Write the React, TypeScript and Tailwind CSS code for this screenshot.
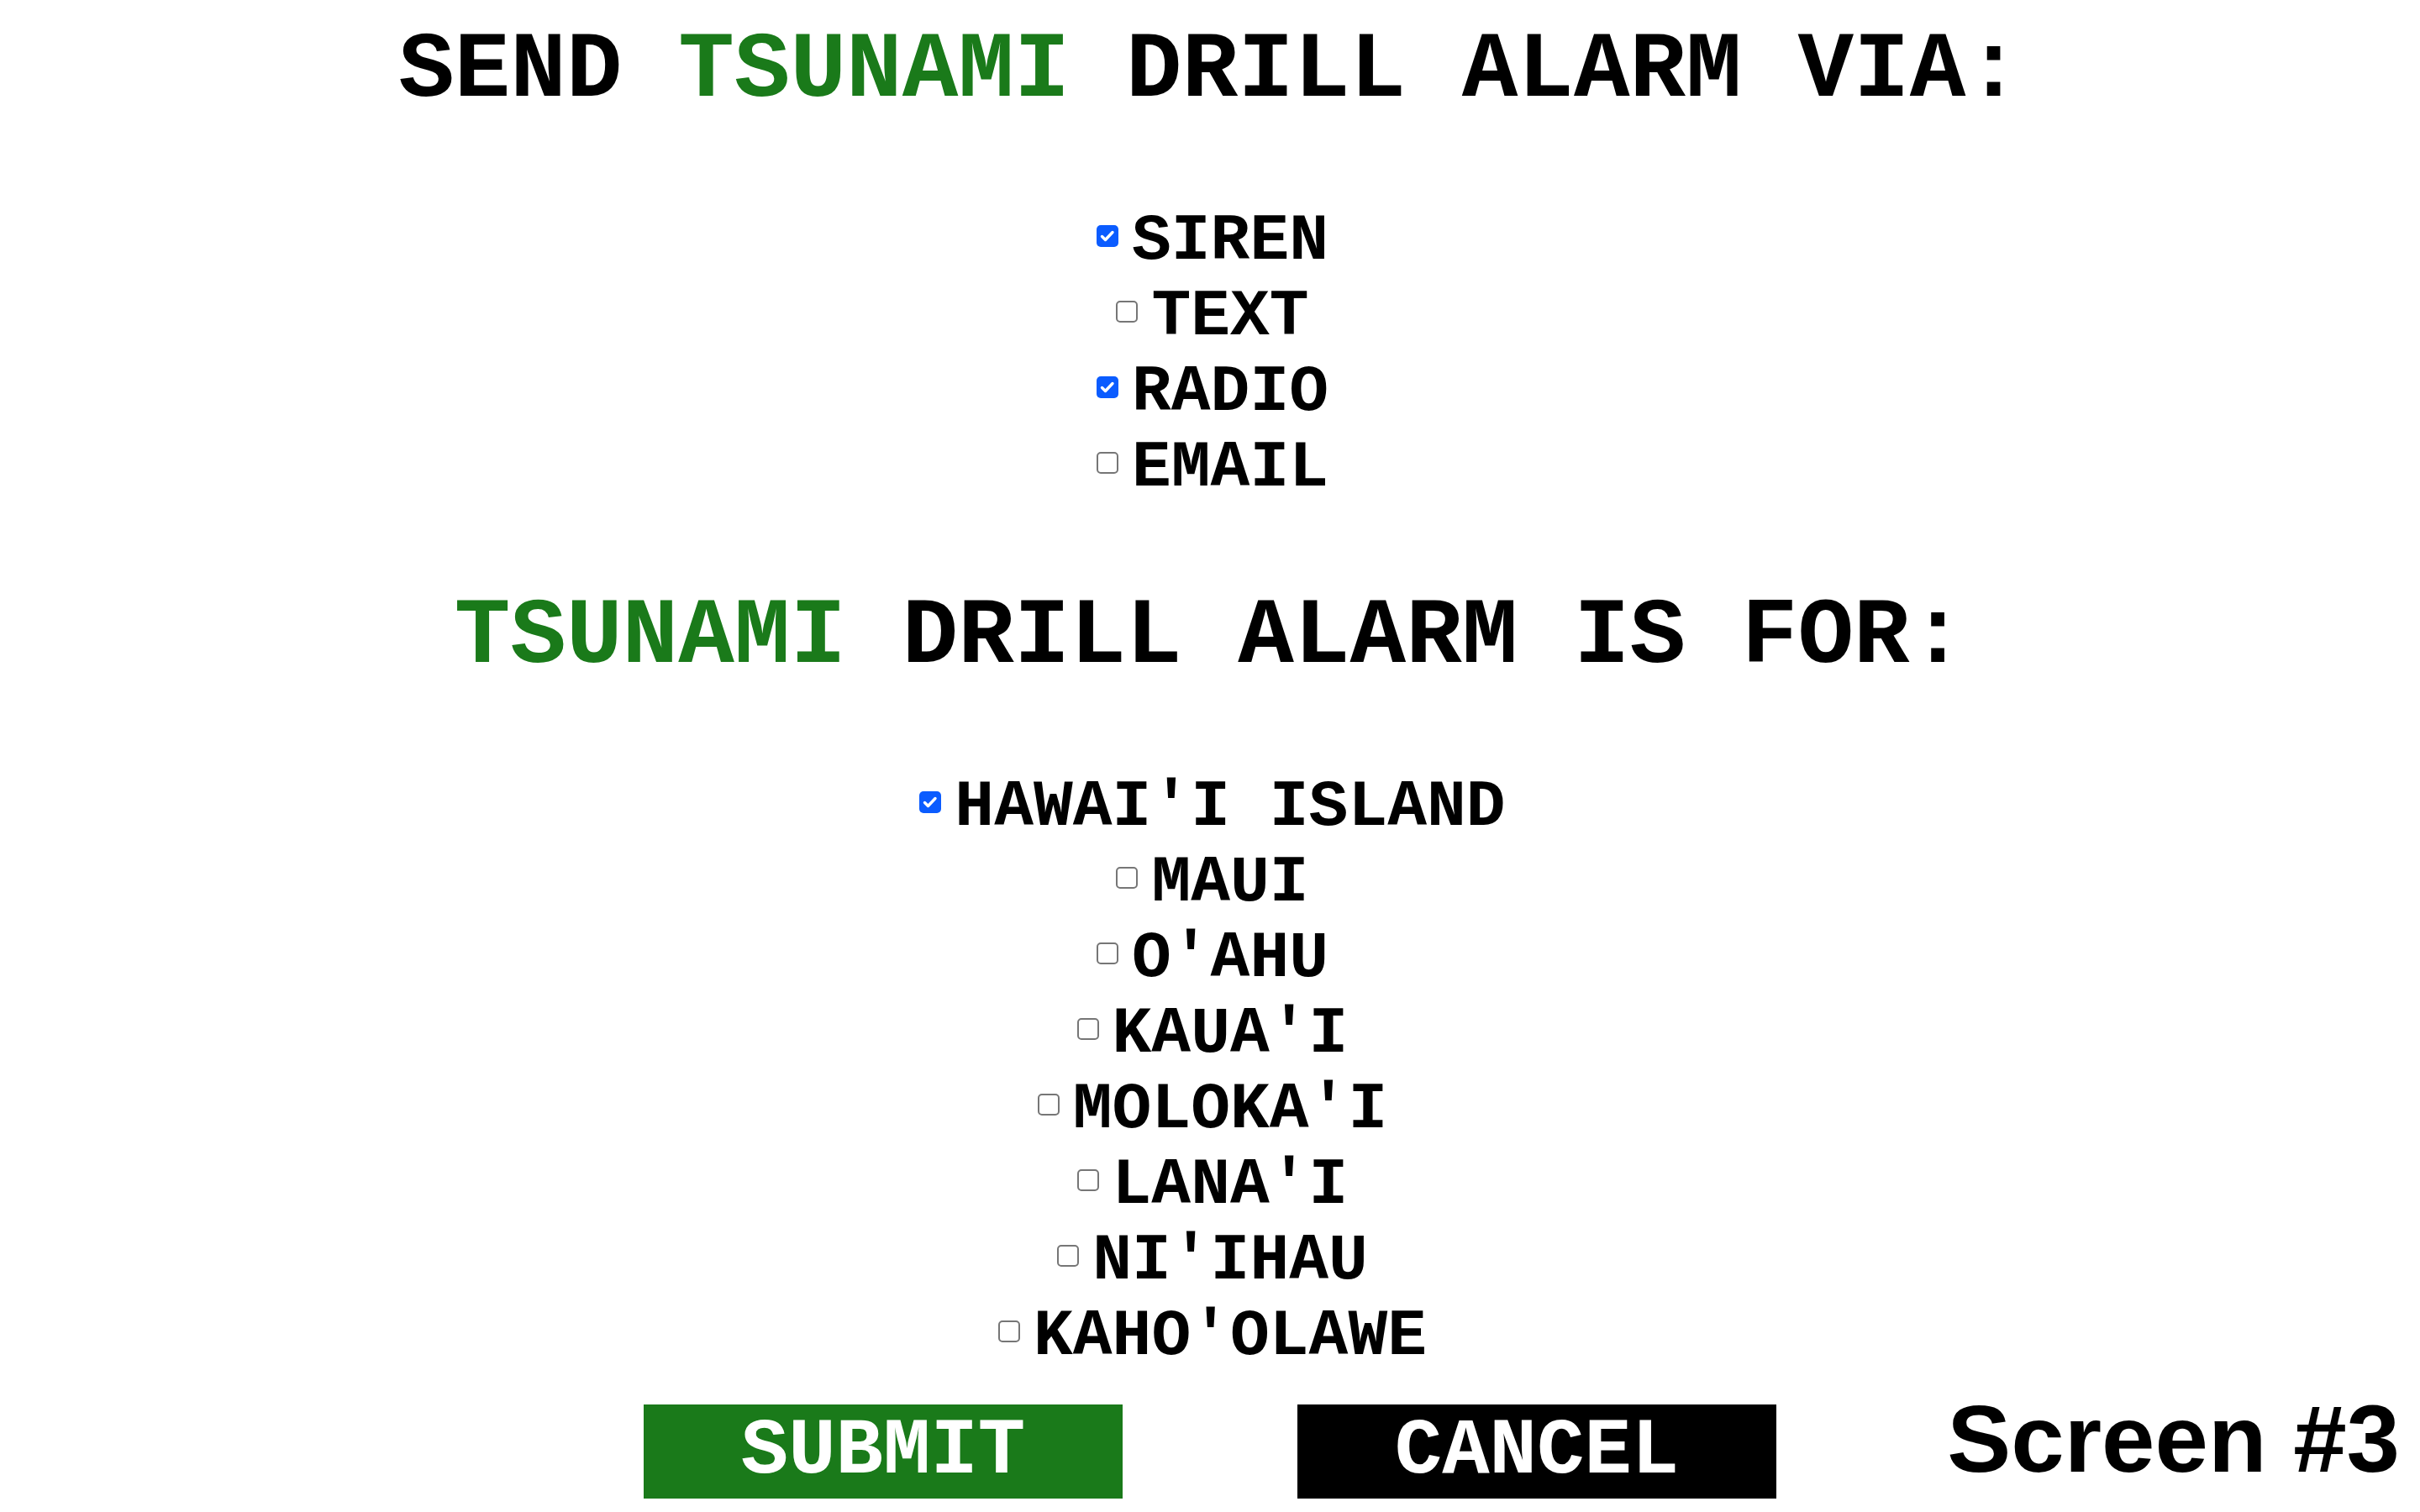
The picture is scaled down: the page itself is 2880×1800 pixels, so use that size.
import React from 'react';

const mono = "font-['Liberation_Mono','Courier_New',monospace] font-bold";

const channels = [
  { label: 'SIREN', checked: true },
  { label: 'TEXT', checked: false },
  { label: 'RADIO', checked: true },
  { label: 'EMAIL', checked: false },
];

const islands = [
  { label: "HAWAI'I ISLAND", checked: true },
  { label: 'MAUI', checked: false },
  { label: "O'AHU", checked: false },
  { label: "KAUA'I", checked: false },
  { label: "MOLOKA'I", checked: false },
  { label: "LANA'I", checked: false },
  { label: "NI'IHAU", checked: false },
  { label: "KAHO'OLAWE", checked: false },
];

const Box: React.FC<{ checked: boolean }> = ({ checked }) =>
  checked ? (
    <span className="mt-[26px] ml-[6px] mr-[16px] flex h-[26px] w-[26px] shrink-0 items-center justify-center rounded-[5px] bg-[#0b5cff]">
      <svg width="26" height="26" viewBox="0 0 26 26">
        <path d="M6.5 13.5 L10.5 17.5 L19 8.5" fill="none" stroke="white" strokeWidth="3.4" strokeLinecap="round" strokeLinejoin="round" />
      </svg>
    </span>
  ) : (
    <span className="mt-[26px] ml-[6px] mr-[16px] h-[26px] w-[26px] shrink-0 rounded-[5px] border-2 border-[#767676] bg-white" />
  );

const CheckRow: React.FC<{ label: string; checked: boolean }> = ({ label, checked }) => (
  <label className="flex items-start justify-center">
    <Box checked={checked} />
    <span className={`${mono} whitespace-pre text-[78px] leading-[90px] text-black`}>{label}</span>
  </label>
);

export default function App() {
  return (
    <div className="flex min-h-[1800px] w-[2880px] flex-col items-center bg-white pt-[20px]">
      <h1 className={`${mono} whitespace-pre text-[111px] leading-[130px] text-black`}>
        SEND <span className="text-[#1a7a1a]">TSUNAMI</span> DRILL ALARM VIA:
      </h1>

      <div className="mt-[92px] flex flex-col">
        {channels.map((c) => (
          <CheckRow key={c.label} label={c.label} checked={c.checked} />
        ))}
      </div>

      <h2 className={`${mono} mt-[92px] whitespace-pre text-[111px] leading-[130px] text-black`}>
        <span className="text-[#1a7a1a]">TSUNAMI</span> DRILL ALARM IS FOR:
      </h2>

      <div className="mt-[92px] flex flex-col">
        {islands.map((c) => (
          <CheckRow key={c.label} label={c.label} checked={c.checked} />
        ))}
      </div>

      <div className="mt-[36px] grid w-full grid-cols-[1fr_auto_1fr] items-start">
        <div />
        <div className="flex gap-[208px]">
          <button className={`${mono} h-[112px] w-[570px] bg-[#1a7a1a] text-[94px] leading-[112px] text-white`}>
            SUBMIT
          </button>
          <button className={`${mono} h-[112px] w-[570px] bg-black text-[94px] leading-[112px] text-white`}>
            CANCEL
          </button>
        </div>
        <div className="flex justify-end pr-[24px]">
          <span className="-mt-[15px] font-['Liberation_Sans',Arial,sans-serif] text-[114px] font-bold leading-[112px] text-black">
            Screen #3
          </span>
        </div>
      </div>
    </div>
  );
}
